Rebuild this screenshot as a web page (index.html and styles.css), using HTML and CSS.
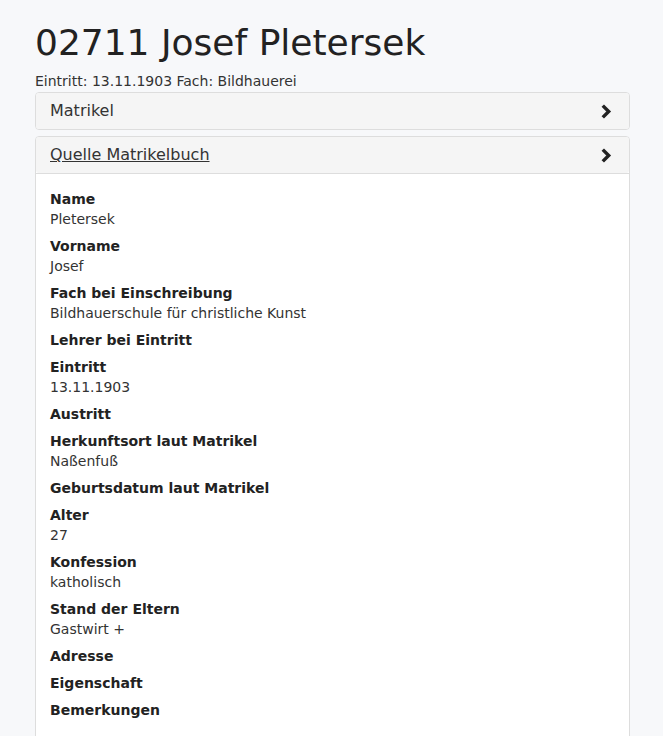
FILE: index.html
```html
<!DOCTYPE html>
<html lang="de">
<head>
    <meta charset="UTF-8">
    <title>02711 Josef Pletersek</title>
    <link rel="stylesheet" href="styles.css">
</head>
<body>
    <div class="page">
        <h1>02711 Josef Pletersek</h1>
        <div class="subtitle">Eintritt: 13.11.1903 Fach: Bildhauerei</div>

        <div class="panel">
            <div class="panel-heading">
                <span>Matrikel</span>
                <svg class="chevron" viewBox="0 0 10 14"><path d="M2 1.5 L7.5 7 L2 12.5" /></svg>
            </div>
        </div>

        <div class="panel">
            <div class="panel-heading">
                <a href="#" class="panel-link">Quelle Matrikelbuch</a>
                <svg class="chevron" viewBox="0 0 10 14"><path d="M2 1.5 L7.5 7 L2 12.5" /></svg>
            </div>
            <div class="panel-body">
                <div class="field"><div class="label">Name</div><div class="value">Pletersek</div></div>
                <div class="field"><div class="label">Vorname</div><div class="value">Josef</div></div>
                <div class="field"><div class="label">Fach bei Einschreibung</div><div class="value">Bildhauerschule für christliche Kunst</div></div>
                <div class="field"><div class="label">Lehrer bei Eintritt</div></div>
                <div class="field"><div class="label">Eintritt</div><div class="value">13.11.1903</div></div>
                <div class="field"><div class="label">Austritt</div></div>
                <div class="field"><div class="label">Herkunftsort laut Matrikel</div><div class="value">Naßenfuß</div></div>
                <div class="field"><div class="label">Geburtsdatum laut Matrikel</div></div>
                <div class="field"><div class="label">Alter</div><div class="value">27</div></div>
                <div class="field"><div class="label">Konfession</div><div class="value">katholisch</div></div>
                <div class="field"><div class="label">Stand der Eltern</div><div class="value">Gastwirt +</div></div>
                <div class="field"><div class="label">Adresse</div></div>
                <div class="field"><div class="label">Eigenschaft</div></div>
                <div class="field"><div class="label">Bemerkungen</div></div>
            </div>
        </div>
    </div>
</body>
</html>
```

FILE: styles.css
```css
body {
    margin: 0;
    padding: 0;
    font-family: "DejaVu Sans", sans-serif;
    font-size: 14px;
    color: #333;
    background-color: #f7f8fa;
    overflow: hidden;
}

.page {
    margin-left: 35px;
    width: 595px;
    padding-top: 21px;
}

h1 {
    margin: 0 0 7px;
    font-size: 36px;
    font-weight: normal;
    line-height: 44px;
    color: #222;
}

.subtitle {
    line-height: 18px;
    margin-bottom: 2px;
}

.panel {
    background-color: #fff;
    border: 1px solid #ddd;
    border-radius: 4px;
    margin-bottom: 6px;
}

.panel-heading {
    display: flex;
    justify-content: space-between;
    align-items: center;
    padding: 9px 15px 9px 14px;
    font-size: 16px;
    line-height: 18px;
    background-color: #f5f5f5;
    border-radius: 3px;
}

.panel-body {
    border-top: 1px solid #ddd;
    padding: 15px 14px 20px;
    min-height: 600px;
}

.panel-link {
    color: #333;
    text-decoration: underline;
}

.chevron {
    width: 12px;
    height: 15px;
    margin-right: 2px;
}

.chevron path {
    fill: none;
    stroke: #222;
    stroke-width: 3.2;
    stroke-linecap: butt;
    stroke-linejoin: miter;
}

.field {
    margin-bottom: 7px;
    line-height: 20px;
}

.label {
    font-weight: bold;
    color: #222;
}
```
